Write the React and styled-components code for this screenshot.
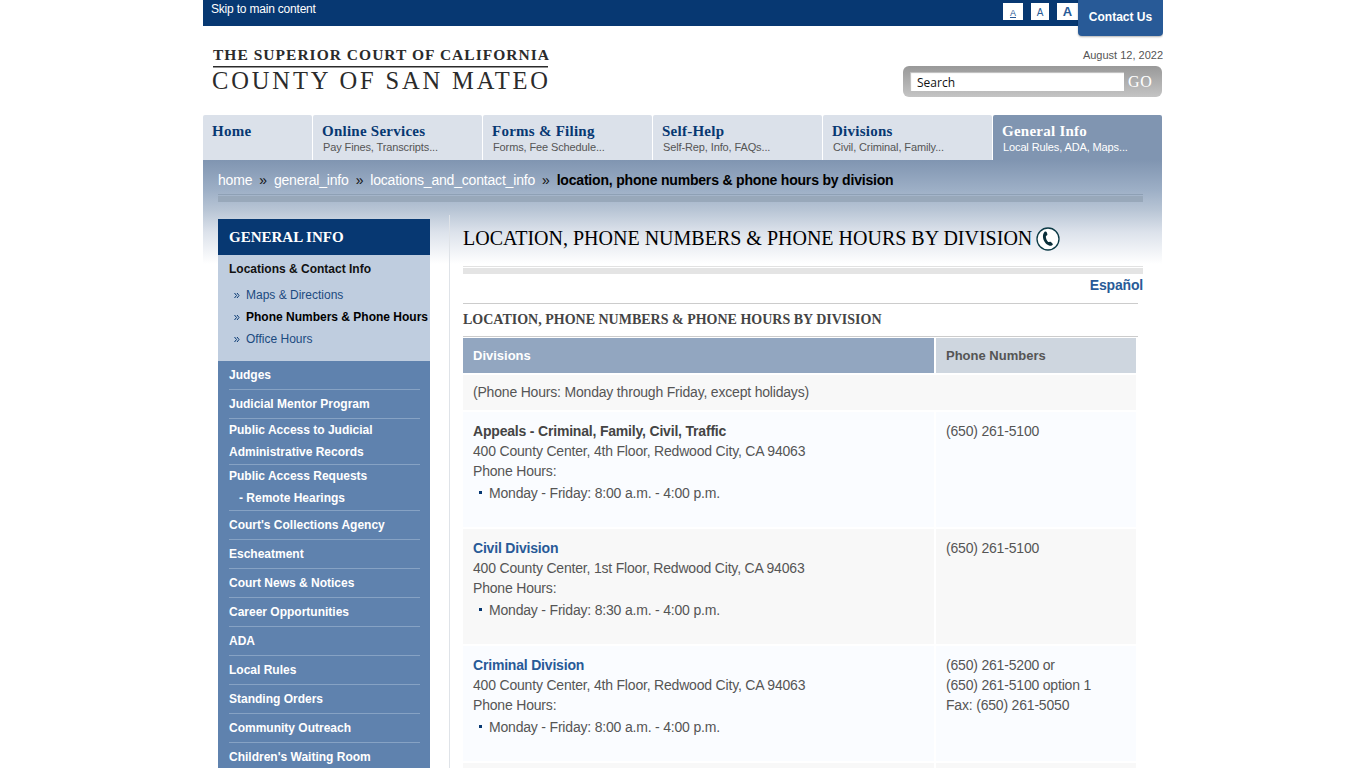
import styled, { createGlobalStyle } from 'styled-components';

const sans = '"Liberation Sans", Arial, sans-serif';
const serif = '"Liberation Serif", "Times New Roman", serif';

const tabs = [
    { title: 'Home', width: 109 },
    { title: 'Online Services', note: 'Pay Fines, Transcripts...' },
    { title: 'Forms & Filing', note: 'Forms, Fee Schedule...' },
    { title: 'Self-Help', note: 'Self-Rep, Info, FAQs...' },
    { title: 'Divisions', note: 'Civil, Criminal, Family...' },
    { title: 'General Info', note: 'Local Rules, ADA, Maps...', active: true }
];

const crumbs = ['home', 'general_info', 'locations_and_contact_info'];

const subLinks = [
    { text: 'Maps & Directions' },
    { text: 'Phone Numbers & Phone Hours', current: true },
    { text: 'Office Hours' }
];

const sideLinks = [
    ['Judges'],
    ['Judicial Mentor Program'],
    ['Public Access to Judicial', 'Administrative Records'],
    ['Public Access Requests', '\u00a0\u00a0\u00a0- Remote Hearings'],
    ["Court's Collections Agency"],
    ['Escheatment'],
    ['Court News & Notices'],
    ['Career Opportunities'],
    ['ADA'],
    ['Local Rules'],
    ['Standing Orders'],
    ['Community Outreach'],
    ["Children's Waiting Room"]
];

const divisions = [
    {
        name: 'Appeals - Criminal, Family, Civil, Traffic',
        address: '400 County Center, 4th Floor, Redwood City, CA 94063',
        hours: 'Monday - Friday: 8:00 a.m. - 4:00 p.m.',
        phones: ['(650) 261-5100']
    },
    {
        name: 'Civil Division',
        link: true,
        address: '400 County Center, 1st Floor, Redwood City, CA 94063',
        hours: 'Monday - Friday: 8:30 a.m. - 4:00 p.m.',
        phones: ['(650) 261-5100']
    },
    {
        name: 'Criminal Division',
        link: true,
        address: '400 County Center, 4th Floor, Redwood City, CA 94063',
        hours: 'Monday - Friday: 8:00 a.m. - 4:00 p.m.',
        phones: ['(650) 261-5200 or', '(650) 261-5100 option 1', 'Fax: (650) 261-5050']
    }
];

function Logo() {
    return (
        <LogoSvg viewBox="0 0 340 50">
            <text x="1" y="17" fontSize="15.5" fontWeight="bold" textLength="336">THE SUPERIOR COURT OF CALIFORNIA</text>
            <rect x="1" y="23" width="335" height="1.5" />
            <text x="0" y="46" fontSize="24.5" textLength="336">COUNTY OF SAN MATEO</text>
        </LogoSvg>
    );
}

function PhoneIcon() {
    return (
        <PhoneSvg viewBox="0 0 24 24">
            <circle cx="12" cy="12" r="11" fill="#fff" stroke="#0c3a46" strokeWidth="1.3" />
            <path
                fill="#0b2f3a"
                d="M8.600 4.800c.9-.6 1.700-.4 2 .3.4.8.7 1.700.8 2.500 0 .6-.7 1-1.500 1.500-.3 1.800.8 4.700 2.300 6 .8-.2 1.700-.7 2.300-.3.9.6 1.700 1.400 2.300 2.300.3.800-.6 1.500-1.800 1.700-5.900.3-10.700-9.200-6.400-14z"
            />
        </PhoneSvg>
    );
}

function Sidebar() {
    return (
        <Side>
            <SideTitle>GENERAL INFO</SideTitle>
            <SubMenu>
                <SubHeading>Locations &amp; Contact Info</SubHeading>
                {subLinks.map((item) => (
                    <SubLink key={item.text} $current={item.current}>
                        <Chevrons viewBox="0 0 5 5">
                            <path d="M.5 0l2 2.500-2 2.500M3 0l2 2.500-2 2.500" />
                        </Chevrons>
                        {item.text}
                    </SubLink>
                ))}
            </SubMenu>
            <SideMenu>
                {sideLinks.map((lines) => (
                    <SideItem key={lines[0]} $double={lines.length > 1}>
                        {lines.map((line) => (<div key={line}>{line}</div>))}
                    </SideItem>
                ))}
            </SideMenu>
        </Side>
    );
}

function DivisionTable() {
    return (
        <Table>
            <HeadCell>Divisions</HeadCell>
            <HeadCell $light>Phone Numbers</HeadCell>
            <NoteCell>(Phone Hours: Monday through Friday, except holidays)</NoteCell>
            {divisions.map((item, i) => (
                <Row key={item.name}>
                    <Cell $odd={i % 2 === 1}>
                        <DivisionName $link={item.link}>{item.name}</DivisionName>
                        <div>{item.address}</div>
                        <div>Phone Hours:</div>
                        <Hours>{item.hours}</Hours>
                    </Cell>
                    <Cell $odd={i % 2 === 1}>
                        {item.phones.map((phone) => (<div key={phone}>{phone}</div>))}
                    </Cell>
                </Row>
            ))}
            <Cell $odd />
            <Cell $odd />
        </Table>
    );
}

export default function App() {
    return (
        <>
            <GlobalStyle />
            <Page>
                <TopBar>
                    <SkipLink>Skip to main content</SkipLink>
                    <TopTools>
                        <SizeButton $size={9} $width={20} $underline>A</SizeButton>
                        <SizeButton $size={10} $width={18}>A</SizeButton>
                        <SizeButton $size={13} $width={21} $bold>A</SizeButton>
                        <Contact>Contact Us</Contact>
                    </TopTools>
                </TopBar>
                <Header>
                    <Logo />
                    <HeaderSide>
                        <Today>August 12, 2022</Today>
                        <SearchBox>
                            <SearchInput defaultValue="Search" />
                            <GoButton>GO</GoButton>
                        </SearchBox>
                    </HeaderSide>
                </Header>
                <Nav>
                    {tabs.map((tab) => (
                        <Tab key={tab.title} $width={tab.width} $active={tab.active}>
                            <TabTitle>{tab.title}</TabTitle>
                            <TabNote>{tab.note}</TabNote>
                        </Tab>
                    ))}
                </Nav>
                <Body>
                    <Breadcrumbs>
                        {crumbs.map((crumb) => (
                            <span key={crumb}>
                                <a>{crumb}</a>
                                <Separator>»</Separator>
                            </span>
                        ))}
                        <b>location, phone numbers &amp; phone hours by division</b>
                    </Breadcrumbs>
                    <CrumbRule />
                    <Columns>
                        <Sidebar />
                        <Main>
                            <Title>
                                LOCATION, PHONE NUMBERS &amp; PHONE HOURS BY DIVISION
                                <PhoneIcon />
                            </Title>
                            <TitleRule />
                            <Language>Español</Language>
                            <SectionTitle>LOCATION, PHONE NUMBERS &amp; PHONE HOURS BY DIVISION</SectionTitle>
                            <DivisionTable />
                        </Main>
                    </Columns>
                </Body>
            </Page>
        </>
    );
}

const GlobalStyle = createGlobalStyle`
    * {
        box-sizing: border-box;
    }
    body {
        margin: 0;
        height: 768px;
        overflow: hidden;
        background: #fff;
        font-family: ${ sans };
        color: #555;
    }
`;

const Page = styled.div`
    width: 960px;
    height: 768px;
    margin: 0 auto;
    overflow: hidden;
`;

const TopBar = styled.div`
    display: flex;
    justify-content: space-between;
    height: 26px;
    background: #073872;
    color: #fff;
`;

const SkipLink = styled.a`
    padding-left: 8px;
    font-size: 12px;
    line-height: 18px;
    letter-spacing: -.2px;
`;

const TopTools = styled.div`
    display: flex;
    align-items: flex-start;
`;

const SizeButton = styled.span`
    width: ${ (props) => props.$width }px;
    height: 17px;
    margin: 3px ${ (props) => props.$bold ? 0 : '8px' } 0 0;
    background: #fff;
    color: #285a97;
    font-size: ${ (props) => props.$size }px;
    font-weight: ${ (props) => props.$bold ? 'bold' : 'normal' };
    line-height: ${ (props) => props.$bold ? 18 : 20 }px;
    text-align: center;
    text-decoration: ${ (props) => props.$underline ? 'underline' : 'none' };
`;

const Contact = styled.a`
    width: 85px;
    height: 36px;
    border-radius: 0 0 4px 4px;
    box-shadow: 0 1px 2px rgba(0, 0, 0, .3);
    background: #285a97;
    font-size: 12px;
    font-weight: bold;
    line-height: 34px;
    text-align: center;
`;

const Header = styled.div`
    display: flex;
    justify-content: space-between;
    height: 89px;
    padding: 17px 0 0 9px;
`;

const LogoSvg = styled.svg`
    width: 340px;
    height: 50px;
    font-family: ${ serif };
    fill: #2b2b2b;
`;

const HeaderSide = styled.div`
    display: flex;
    flex-flow: column;
    align-items: flex-end;
    padding-top: 5px;
`;

const Today = styled.div`
    font-size: 11px;
    line-height: 15px;
`;

const SearchBox = styled.div`
    display: flex;
    width: 259px;
    height: 31px;
    margin: 3px 1px 0 0;
    padding: 6px 0 0 7px;
    border-radius: 6px;
    background: linear-gradient(#999, #c4c4c4);
`;

const SearchInput = styled.input`
    width: 214px;
    height: 19px;
    padding: 1px 7px 0;
    border: none;
    outline: none;
    box-shadow: inset 1px 1px 1px #bbb;
    background: #fff;
    color: #111;
    font-family: "Open Sans", "DejaVu Sans", sans-serif;
    font-size: 12px;
`;

const GoButton = styled.div`
    padding-left: 4px;
    color: #fff;
    font-family: ${ serif };
    font-size: 16px;
    line-height: 19px;
    letter-spacing: .6px;
`;

const Nav = styled.div`
    display: flex;
    gap: 1px;
    height: 45px;
`;

const Tab = styled.div`
    width: ${ (props) => props.$width || 169 }px;
    padding: 8px 0 0 9px;
    border-radius: 2px 2px 0 0;
    background: ${ (props) => props.$active ? '#8095b1' : '#dbe1ea' };
    color: ${ (props) => props.$active ? '#fff' : '#073872' };

    & > div + div {
        color: ${ (props) => props.$active ? '#fff' : '#555' };
    }
`;

const TabTitle = styled.div`
    font-family: ${ serif };
    font-size: 15px;
    font-weight: bold;
    line-height: 17px;
    letter-spacing: .25px;
    white-space: nowrap;
`;

const TabNote = styled.div`
    padding-left: 1px;
    font-size: 11px;
    line-height: 14px;
    letter-spacing: -.12px;
    white-space: nowrap;
`;

const Body = styled.div`
    width: 959px;
    padding: 0 19px 0 15px;
    background: linear-gradient(#8095b1 0, #9dafc6 30px, #b8c5d5 50px, #dce2eb 72px, #fff 104px);
`;

const Breadcrumbs = styled.div`
    padding-top: 10px;
    color: #fff;
    font-size: 14px;
    line-height: 20px;
    letter-spacing: -.19px;
    white-space: nowrap;

    b {
        color: #000;
    }
`;

const Separator = styled.span`
    margin: 0 7px;
    color: #111;
`;

const CrumbRule = styled.div`
    height: 8px;
    margin-top: 4px;
    border-top: 1px solid #8ea0b5;
    border-bottom: 6px solid #98a8ba;
`;

const Columns = styled.div`
    display: flex;
    height: 566px;
`;

const Side = styled.div`
    width: 212px;
    margin-top: 17px;
    font-size: 12px;
`;

const SideTitle = styled.div`
    height: 36px;
    padding-left: 11px;
    background: #073872;
    color: #fff;
    font-family: ${ serif };
    font-size: 15px;
    font-weight: bold;
    line-height: 37px;
`;

const SubMenu = styled.div`
    height: 106px;
    padding-top: 3px;
    background: #bfcddf;
    white-space: nowrap;
`;

const SubHeading = styled.div`
    padding-left: 11px;
    margin-bottom: 4px;
    color: #111;
    font-weight: bold;
    line-height: 22px;
`;

const SubLink = styled.div`
    display: flex;
    align-items: center;
    padding-left: 16px;
    color: ${ (props) => props.$current ? '#000' : '#1b4a80' };
    font-weight: ${ (props) => props.$current ? 'bold' : 'normal' };
    line-height: 22px;
`;

const Chevrons = styled.svg`
    width: 5px;
    height: 5px;
    margin: 1px 7px 0 0;
    overflow: visible;
    fill: none;
    stroke: #073872;
    stroke-width: 1;
`;

const SideMenu = styled.div`
    padding: 0 10px 0 11px;
    background: #5f82ae;
`;

const SideItem = styled.div`
    height: ${ (props) => props.$double ? 46 : 29 }px;
    border-bottom: 1px solid #86a2c4;
    color: #fff;
    font-weight: bold;
    line-height: ${ (props) => props.$double ? 22 : 28 }px;
    white-space: nowrap;
`;

const Main = styled.div`
    width: 694px;
    margin: 13px 0 0 19px;
    padding-left: 13px;
    border-left: 1px solid #dfe3e8;
`;

const Title = styled.div`
    display: flex;
    height: 51px;
    padding-top: 11px;
    color: #000;
    font-family: ${ serif };
    font-size: 20px;
    line-height: 24px;
    white-space: nowrap;
`;

const PhoneSvg = styled.svg`
    width: 24px;
    height: 24px;
    margin: 1px 0 0 4px;
`;

const TitleRule = styled.div`
    height: 8px;
    border-top: 1px solid #e2e2e2;
    border-bottom: 6px solid #e4e4e4;
`;

const Language = styled.div`
    height: 29px;
    color: #285a97;
    font-size: 14px;
    font-weight: bold;
    line-height: 22px;
    letter-spacing: -.19px;
    text-align: right;
`;

const SectionTitle = styled.div`
    width: 675px;
    height: 34px;
    border-top: 1px solid #ccc;
    border-bottom: 1px solid #ccc;
    color: #444;
    font-family: ${ serif };
    font-size: 14px;
    font-weight: bold;
    line-height: 32px;
`;

const Table = styled.div`
    display: grid;
    grid-template-columns: 471px 200px;
    grid-template-rows: 35px 35px repeat(4, 115px);
    gap: 2px;
    margin-top: 1px;
    font-size: 14px;
    line-height: 20px;
    letter-spacing: -.19px;
`;

const HeadCell = styled.div`
    padding-left: 10px;
    background: ${ (props) => props.$light ? '#ced6df' : '#92a6c0' };
    color: ${ (props) => props.$light ? '#555' : '#fff' };
    font-size: 13px;
    font-weight: bold;
    line-height: 35px;
    letter-spacing: 0;
`;

const NoteCell = styled.div`
    grid-column: span 2;
    padding-left: 10px;
    background: #f8f8f8;
    line-height: 35px;
`;

const Row = styled.div`
    display: contents;
`;

const Cell = styled.div`
    padding: 9px 10px 0;
    background: ${ (props) => props.$odd ? '#f8f8f8' : '#fafcff' };
`;

const DivisionName = styled.div`
    color: ${ (props) => props.$link ? '#285a97' : '#444' };
    font-weight: bold;
`;

const Hours = styled.div`
    display: flex;
    align-items: center;
    gap: 7px;
    margin-top: 2px;
    padding-left: 6px;

    &::before {
        content: '';
        width: 3px;
        height: 3px;
        margin-top: -1px;
        background: #073872;
    }
`;
